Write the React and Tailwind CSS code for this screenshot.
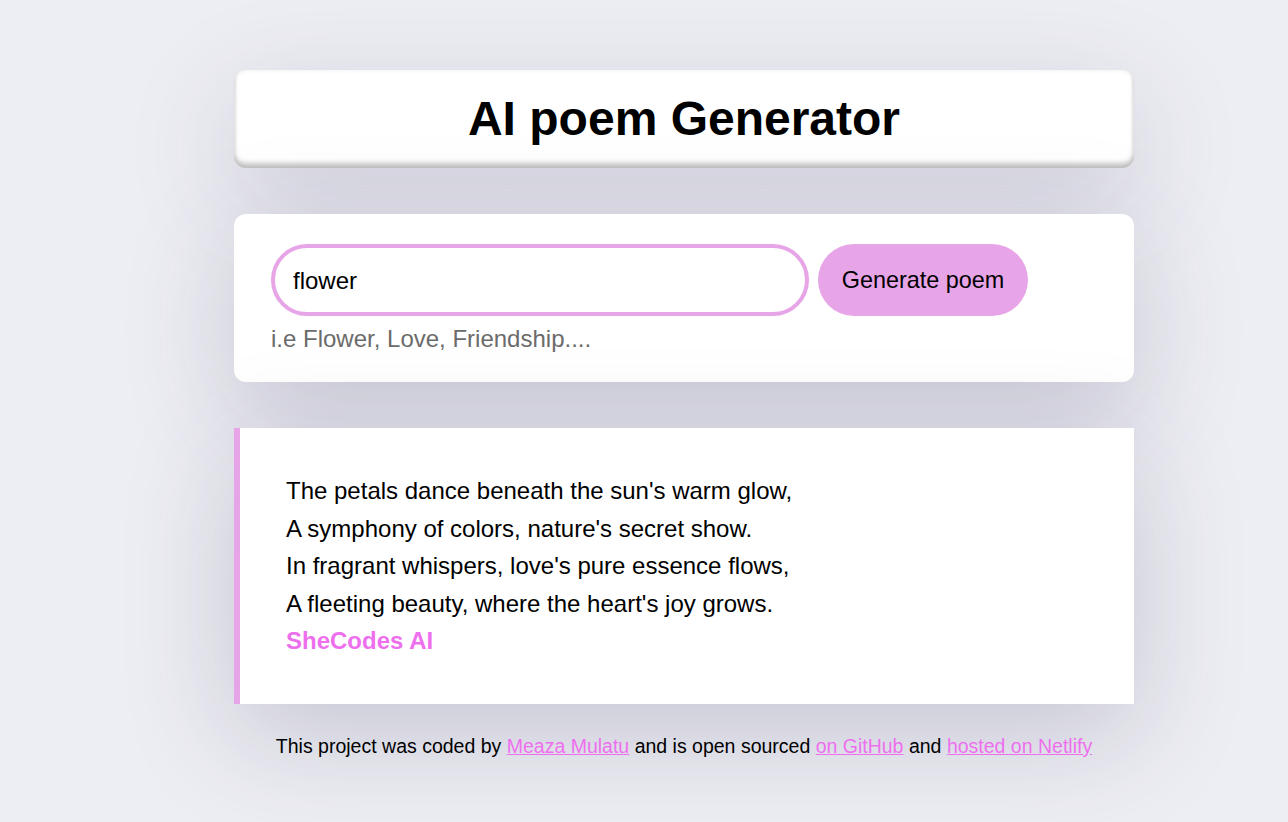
import React, { useState } from 'react';

const cardShadow = 'shadow-[0_30px_110px_rgba(60,50,100,0.22)]';

const App = () => {
  const [topic, setTopic] = useState('flower');

  return (
    <div
      className="min-h-screen bg-[#edeef3] text-black"
      style={{ fontFamily: '"Liberation Sans", Arial, sans-serif' }}
    >
      <div className="ml-[234px] w-[900px] pt-[70px] pb-[40px]">
        {/* Header */}
        <header className="flex h-[98px] items-center justify-center rounded-xl bg-white shadow-[inset_0_-5px_5px_rgba(0,0,0,0.22),inset_0_0_5px_rgba(0,0,0,0.08),0_30px_110px_rgba(60,50,100,0.18)]">
          <h1 className="text-[48px] font-bold leading-none">AI poem Generator</h1>
        </header>

        {/* Search form */}
        <div className={`mt-[46px] rounded-xl bg-white px-[37px] pt-[30px] pb-[29px] ${cardShadow}`}>
          <form className="flex items-center" onSubmit={(e) => e.preventDefault()}>
            <input
              type="text"
              value={topic}
              onChange={(e) => setTopic(e.target.value)}
              className="h-[72px] w-[538px] rounded-full border-[4px] border-[#e7a5e7] px-[18px] pt-[2px] text-[24px] outline-none"
            />
            <button
              type="submit"
              className="ml-[9px] h-[72px] w-[210px] rounded-full bg-[#e7a5e7] pt-[2px] text-[23.4px] text-black"
            >
              Generate poem
            </button>
          </form>
          <div className="mt-[9px] text-[24px] leading-[28px] text-[#6b6b6b]">
            i.e Flower, Love, Friendship....
          </div>
        </div>

        {/* Poem */}
        <div
          className={`mt-[46px] border-l-[6px] border-[#e7a5e7] bg-white pl-[46px] pr-[40px] py-[44px] text-[24px] leading-[37.5px] ${cardShadow}`}
        >
          <div>The petals dance beneath the sun's warm glow,</div>
          <div>A symphony of colors, nature's secret show.</div>
          <div>In fragrant whispers, love's pure essence flows,</div>
          <div>A fleeting beauty, where the heart's joy grows.</div>
          <div className="font-bold text-[#ee6fee]">SheCodes AI</div>
        </div>

        {/* Footer */}
        <footer className="mt-[31px] text-center text-[19.5px] leading-[22px]">
          This project was coded by{' '}
          <a href="#" className="text-[#ee6fee] underline">
            Meaza Mulatu
          </a>{' '}
          and is open sourced{' '}
          <a href="#" className="text-[#ee6fee] underline">
            on GitHub
          </a>{' '}
          and{' '}
          <a href="#" className="text-[#ee6fee] underline">
            hosted on Netlify
          </a>
        </footer>
      </div>
    </div>
  );
};

export default App;
